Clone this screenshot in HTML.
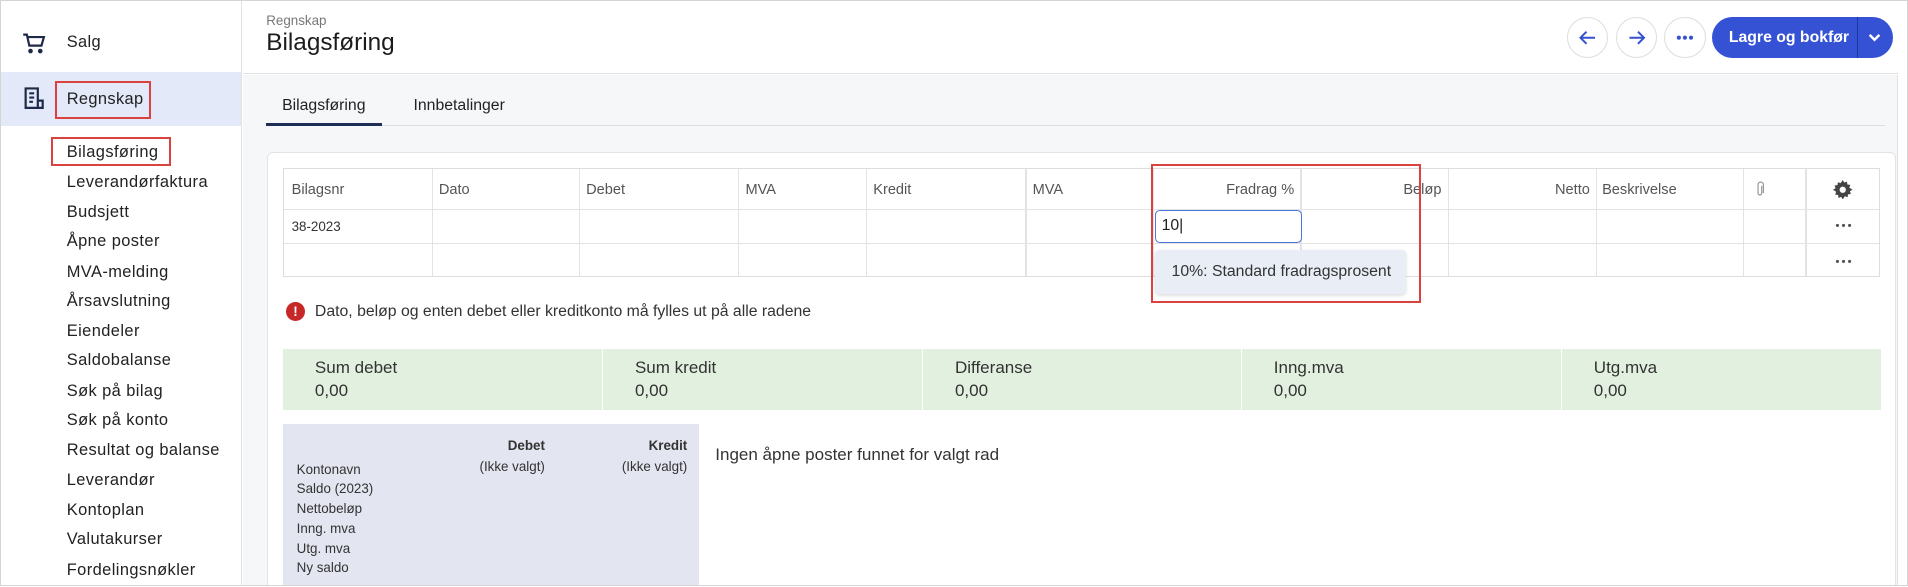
<!DOCTYPE html>
<html><head><meta charset="utf-8"><style>
*{box-sizing:border-box;margin:0;padding:0}
html,body{width:1908px;height:587px;overflow:hidden;background:#fff}
#w{zoom:1.2168;width:1568px;height:482px;position:relative;font-family:"Liberation Sans",sans-serif;color:#222;border:1px solid #d5d5d5;overflow:hidden}
.a{position:absolute}
.side{left:0;top:0;width:198px;height:482px;border-right:1px solid #e2e2e2;background:#fff}
.sub{left:54px;font-size:13.5px;letter-spacing:.35px;color:#222}
.rb{border:2px solid #d9423f}
.th{font-size:12px;color:#555}
.vl{position:absolute;top:0;bottom:0;width:1px;background:#e3e3e3}
.gc{font-size:14px;color:#333;line-height:19px}
</style></head><body><div id="w">
<div class="a side">
  <svg class="a" style="left:17px;top:25px" width="20" height="20" viewBox="0 0 20 20" fill="none" stroke="#1e2a4a" stroke-width="1.8"><path d="M1 3h3l2 9h10l2-7H5"/><circle cx="7" cy="16.5" r="1" fill="#1e2a4a"/><circle cx="15" cy="16.5" r="1" fill="#1e2a4a"/></svg>
  <div class="a" style="left:54px;top:26px;font-size:13.5px;letter-spacing:.3px">Salg</div>
  <div class="a" style="left:0;top:58px;width:197px;height:45px;background:#e3e9f8"></div>
  <svg class="a" style="left:17px;top:70px" width="20" height="20" viewBox="0 0 20 20" fill="none" stroke="#1e2a4a" stroke-width="1.8"><path d="M3 2h10v16H3z"/><path d="M13 12h4v6h-4M6 6h4M6 9.5h4M6 13h3"/></svg>
  <div class="a rb" style="left:44px;top:66px;width:79px;height:31px"></div>
  <div class="a" style="left:54px;top:73px;font-size:13.5px;letter-spacing:.3px">Regnskap</div>
  <div class="a rb" style="left:41px;top:112px;width:99px;height:24px"></div>
  <div class="a sub" style="top:117px">Bilagsføring</div>
  <div class="a sub" style="top:141px">Leverandørfaktura</div>
  <div class="a sub" style="top:166px">Budsjett</div>
  <div class="a sub" style="top:190px">Åpne poster</div>
  <div class="a sub" style="top:215px">MVA-melding</div>
  <div class="a sub" style="top:239px">Årsavslutning</div>
  <div class="a sub" style="top:264px">Eiendeler</div>
  <div class="a sub" style="top:288px">Saldobalanse</div>
  <div class="a sub" style="top:313px">Søk på bilag</div>
  <div class="a sub" style="top:337px">Søk på konto</div>
  <div class="a sub" style="top:362px">Resultat og balanse</div>
  <div class="a sub" style="top:386px">Leverandør</div>
  <div class="a sub" style="top:411px">Kontoplan</div>
  <div class="a sub" style="top:435px">Valutakurser</div>
  <div class="a sub" style="top:460px">Fordelingsnøkler</div>
</div>
<div class="a" style="left:199px;top:0;width:1360px;height:60px;background:#fff;border-bottom:1px solid #e2e2e2"></div>
<div class="a" style="left:199px;top:61px;width:1360px;height:421px;background:#f6f7f9;border-right:1px solid #e2e2e2"></div>
<div class="a" style="left:218px;top:10px;font-size:11px;color:#777">Regnskap</div>
<div class="a" style="left:218px;top:23px;font-size:20px;color:#1c1c1c">Bilagsføring</div>
<div class="a" style="left:1287px;top:13px;width:34px;height:34px;border:1px solid #ddd;border-radius:50%;background:#fff"></div>
<svg class="a" style="left:1296px;top:22px" width="16" height="16" viewBox="0 0 16 16" fill="none" stroke="#3550d0" stroke-width="1.6"><path d="M14 8H2M7 3L2 8l5 5"/></svg>
<div class="a" style="left:1327px;top:13px;width:34px;height:34px;border:1px solid #ddd;border-radius:50%;background:#fff"></div>
<svg class="a" style="left:1336px;top:22px" width="16" height="16" viewBox="0 0 16 16" fill="none" stroke="#3550d0" stroke-width="1.6"><path d="M2 8h12M9 3l5 5-5 5"/></svg>
<div class="a" style="left:1367px;top:13px;width:34px;height:34px;border:1px solid #ddd;border-radius:50%;background:#fff"></div>
<svg class="a" style="left:1375px;top:27px" width="18" height="6" viewBox="0 0 18 6" fill="#3550d0"><circle cx="4" cy="3" r="1.7"/><circle cx="9" cy="3" r="1.7"/><circle cx="14" cy="3" r="1.7"/></svg>
<div class="a" style="left:1406px;top:13px;width:149px;height:34px;border-radius:17px;background:#3552d4;color:#fff;font-size:13px;font-weight:bold;line-height:34px;padding-left:14px">Lagre og bokfør</div>
<div class="a" style="left:1525px;top:13px;width:1px;height:34px;background:#1f36a8"></div>
<svg class="a" style="left:1533px;top:24px" width="14" height="12" viewBox="0 0 14 12" fill="none" stroke="#fff" stroke-width="2"><path d="M3 4l4 4 4-4"/></svg>
<div class="a" style="left:231px;top:79px;font-size:13px;color:#222">Bilagsføring</div>
<div class="a" style="left:339px;top:79px;font-size:13px;color:#222">Innbetalinger</div>
<div class="a" style="left:218px;top:102px;width:1330px;height:1px;background:#ddd"></div>
<div class="a" style="left:218px;top:100px;width:95px;height:3px;background:#1e2e55"></div>
<div class="a" style="left:219px;top:124px;width:1338px;height:370px;background:#fff;border:1px solid #e3e3e3;border-radius:5px"></div>
<div class="a" style="left:232px;top:137px;width:1312px;height:90px;border:1px solid #ddd">
  <div class="a" style="left:0;right:0;top:33px;height:1px;background:#e3e3e3"></div>
  <div class="a" style="left:0;right:0;top:61px;height:1px;background:#e3e3e3"></div>
  <div class="vl" style="left:121px"></div><div class="vl" style="left:242px"></div><div class="vl" style="left:373px"></div><div class="vl" style="left:478px"></div><div class="vl" style="left:609px"></div><div class="vl" style="left:714px"></div><div class="vl" style="left:835px"></div><div class="vl" style="left:956px"></div><div class="vl" style="left:1078px"></div><div class="vl" style="left:1199px"></div><div class="vl" style="left:1250px"></div>
  <div class="a th" style="left:6px;top:11px">Bilagsnr</div>
  <div class="a th" style="left:127px;top:11px">Dato</div>
  <div class="a th" style="left:248px;top:11px">Debet</div>
  <div class="a th" style="left:379px;top:11px">MVA</div>
  <div class="a th" style="left:484px;top:11px">Kredit</div>
  <div class="a th" style="left:615px;top:11px">MVA</div>
  <div class="a th" style="left:714px;width:116px;text-align:right;top:11px">Fradrag %</div>
  <div class="a th" style="left:835px;width:116px;text-align:right;top:11px">Beløp</div>
  <div class="a th" style="left:956px;width:117px;text-align:right;top:11px">Netto</div>
  <div class="a th" style="left:1083px;top:11px">Beskrivelse</div>
  <svg class="a" style="left:1209px;top:10px" width="8" height="14" viewBox="0 0 8 14" fill="none" stroke="#999" stroke-width="1"><path d="M5.5 4v6a1.5 1.5 0 0 1-3 0V3a2.2 2.2 0 0 1 4.4 0v7"/></svg>
  <svg class="a" style="left:1273px;top:9px" width="16" height="16" viewBox="0 0 16 16"><path fill="#444" d="M8 0l1.2 2.1 2.3-.8.3 2.4 2.4.3-.8 2.3L16 8l-2.1 1.2.8 2.3-2.4.3-.3 2.4-2.3-.8L8 16l-1.2-2.1-2.3.8-.3-2.4-2.4-.3.8-2.3L0 8l2.1-1.2-.8-2.3 2.4-.3.3-2.4 2.3.8z"/><circle cx="8" cy="8" r="2.6" fill="#fff"/></svg>
  <div class="a" style="left:6px;top:41px;font-size:11px;color:#333">38-2023</div>
  <svg class="a" style="left:1274px;top:45px" width="14" height="4" viewBox="0 0 14 4" fill="#555"><circle cx="2" cy="2" r="1.3"/><circle cx="7" cy="2" r="1.3"/><circle cx="12" cy="2" r="1.3"/></svg>
  <svg class="a" style="left:1274px;top:74px" width="14" height="4" viewBox="0 0 14 4" fill="#555"><circle cx="2" cy="2" r="1.3"/><circle cx="7" cy="2" r="1.3"/><circle cx="12" cy="2" r="1.3"/></svg>
</div>
<div class="a" style="left:948px;top:172px;width:121px;height:27px;border:1.5px solid #4a78d8;border-radius:4px;background:#fff;font-size:13px;padding:5px 0 0 5px">10|</div>
<div class="a" style="left:948px;top:205px;width:207px;height:36px;background:#e8edf6;border-radius:4px;box-shadow:0 1px 3px rgba(0,0,0,.15);font-size:13px;color:#333;padding:10px 0 0 14px">10%: Standard fradragsprosent</div>
<div class="a rb" style="left:945px;top:134px;width:222px;height:114px"></div>
<div class="a" style="left:234px;top:247px;width:16px;height:16px;border-radius:50%;background:#c62828;color:#fff;font-size:11px;font-weight:bold;text-align:center;line-height:16px">!</div>
<div class="a" style="left:258px;top:248px;font-size:13px;color:#333">Dato, beløp og enten debet eller kreditkonto må fylles ut på alle radene</div>
<div class="a" style="left:232px;top:286px;width:1313px;height:50px;background:#e2f1df"></div>
<div class="a" style="left:494px;top:286px;width:1px;height:50px;background:#fff"></div>
<div class="a" style="left:757px;top:286px;width:1px;height:50px;background:#fff"></div>
<div class="a" style="left:1019px;top:286px;width:1px;height:50px;background:#fff"></div>
<div class="a" style="left:1282px;top:286px;width:1px;height:50px;background:#fff"></div>
<div class="a gc" style="left:258px;top:292px">Sum debet<br>0,00</div>
<div class="a gc" style="left:521px;top:292px">Sum kredit<br>0,00</div>
<div class="a gc" style="left:784px;top:292px">Differanse<br>0,00</div>
<div class="a gc" style="left:1046px;top:292px">Inng.mva<br>0,00</div>
<div class="a gc" style="left:1309px;top:292px">Utg.mva<br>0,00</div>
<div class="a" style="left:232px;top:348px;width:342px;height:140px;background:#e3e5f0;font-size:11px;color:#333">
  <div class="a" style="left:152px;width:63px;text-align:right;top:11px;font-weight:bold">Debet</div>
  <div class="a" style="left:272px;width:60px;text-align:right;top:11px;font-weight:bold">Kredit</div>
  <div class="a" style="left:142px;width:73px;text-align:right;top:28px">(Ikke valgt)</div>
  <div class="a" style="left:259px;width:73px;text-align:right;top:28px">(Ikke valgt)</div>
  <div class="a" style="left:11px;top:29px;line-height:16.2px">Kontonavn<br>Saldo (2023)<br>Nettobeløp<br>Inng. mva<br>Utg. mva<br>Ny saldo</div>
</div>
<div class="a" style="left:587px;top:365px;font-size:14px;color:#333">Ingen åpne poster funnet for valgt rad</div>
</div></body></html>
